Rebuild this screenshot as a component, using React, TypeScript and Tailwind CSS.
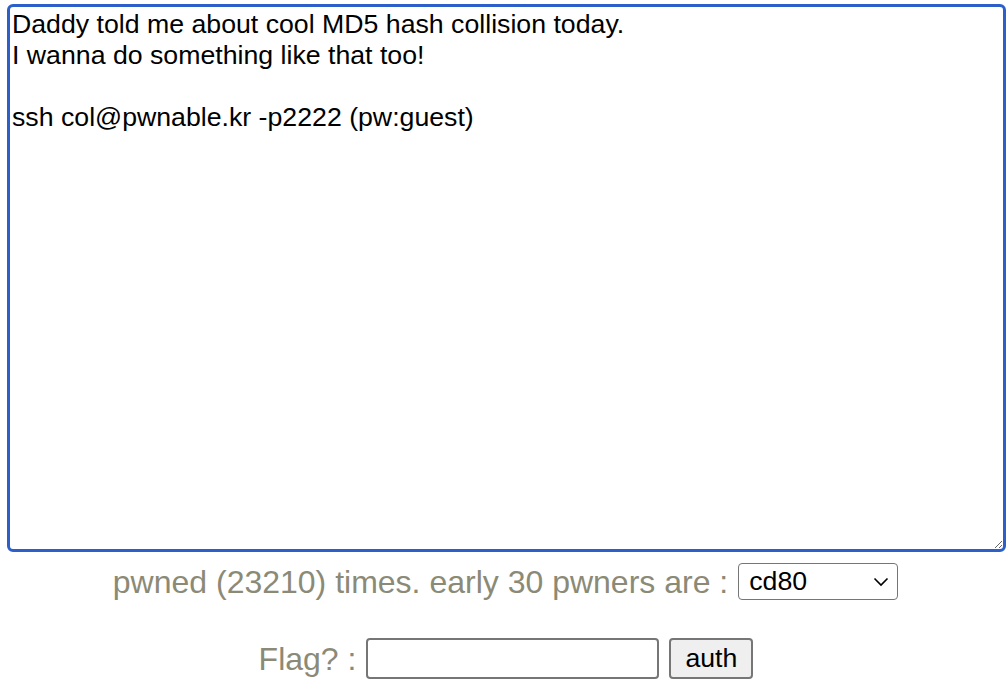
import React from "react";

export default function App() {
  const text =
    "Daddy told me about cool MD5 hash collision today.\nI wanna do something like that too!\n\nssh col@pwnable.kr -p2222 (pw:guest)";
  return (
    <div className="w-[1008px] h-[692px] bg-white overflow-hidden" style={{ fontFamily: '"Liberation Sans", Arial, sans-serif' }}>
      <div className="pt-[4px] pl-[7px]">
        <textarea
          readOnly
          defaultValue={text}
          className="block w-[999px] h-[548px] border-[3px] border-[#2d5fcb] rounded-[6px] px-[2px] pt-[2px] text-[26.7px] leading-[31px] text-black outline-none resize"
          style={{ fontFamily: '"Liberation Sans", Arial, sans-serif' }}
        />
      </div>
      <div className="flex items-center justify-center pl-[3px] mt-[11px] h-[37px] text-[32px] text-[#8b8a76]">
        <span>pwned (23210) times. early 30 pwners are :</span>
        <div className="ml-[10px] w-[160px] h-[37px] border border-[#767676] rounded-[4px] flex items-center justify-between pl-[10px] pr-[8px] text-black text-[26.7px]">
          <span>cd80</span>
          <svg width="16" height="10" viewBox="0 0 16 10" fill="none">
            <path d="M1.5 1.5 L8 8 L14.5 1.5" stroke="#000" strokeWidth="1.6" />
          </svg>
        </div>
      </div>
      <div className="flex items-center justify-center pl-[4px] mt-[38px] h-[41px] text-[32px] text-[#8b8a76]">
        <span>Flag? :</span>
        <div className="ml-[10px] w-[293px] h-[41px] border-2 border-[#767676] rounded-[4px] bg-white" />
        <div className="ml-[10px] w-[84px] h-[41px] border-2 border-[#767676] rounded-[4px] bg-[#efefef] flex items-center justify-center text-black text-[26.7px]">
          auth
        </div>
      </div>
    </div>
  );
}
